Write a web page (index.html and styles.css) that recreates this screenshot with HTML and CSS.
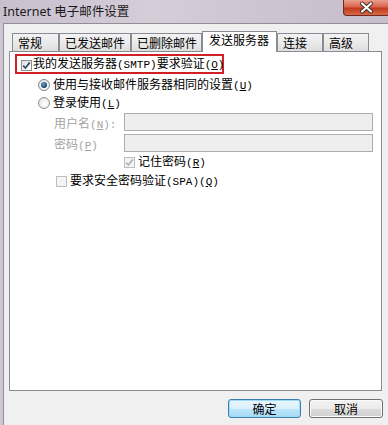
FILE: index.html
```html
<!DOCTYPE html>
<html lang="zh-CN">
<head>
<meta charset="utf-8">
<title>Internet 电子邮件设置</title>
<link rel="stylesheet" href="styles.css">
</head>
<body>
<div class="win">
  <div class="titlebar">
    <span class="title">Internet 电子邮件设置</span>
    <div class="close">
      <svg width="46" height="16" viewBox="0 0 46 16">
        <path d="M18 3.5 L27 11.5 M27 3.5 L18 11.5" stroke="#3b2a2a" stroke-width="4" stroke-linecap="round"/>
        <path d="M18 3.5 L27 11.5 M27 3.5 L18 11.5" stroke="#ffffff" stroke-width="2.2" stroke-linecap="round"/>
      </svg>
    </div>
  </div>
  <div class="frame">
    <div class="dialog">
      <div class="tabs">
        <div class="tab t1">常规</div>
        <div class="tab t2">已发送邮件</div>
        <div class="tab t3">已删除邮件</div>
        <div class="tab sel t4">发送服务器</div>
        <div class="tab t5">连接</div>
        <div class="tab t6">高级</div>
      </div>
      <div class="panel">
        <div class="redbox">
          <span class="cb">
            <svg width="9" height="9" viewBox="0 0 9 9"><path d="M1.2 4.6 L3.4 7 L7.8 1.4" fill="none" stroke="#2f4a6e" stroke-width="1.7"/></svg>
          </span>
          <span class="lbl">我的发送服务器<span class="en">(SMTP)</span>要求验证<span class="en">(<u>O</u>)</span></span>
        </div>
        <div class="rrow">
          <span class="radio on"><span class="dot"></span></span>
          <span class="lbl">使用与接收邮件服务器相同的设置<span class="en">(<u>U</u>)</span></span>
        </div>
        <div class="rrow">
          <span class="radio"></span>
          <span class="lbl">登录使用<span class="en">(<u>L</u>)</span></span>
        </div>
        <div class="frow first">
          <span class="flbl dis">用户名<span class="en">(<u>N</u>):</span></span>
          <span class="inp"></span>
        </div>
        <div class="frow">
          <span class="flbl dis">密码<span class="en">(<u>P</u>)</span></span>
          <span class="inp"></span>
        </div>
        <div class="crow remember">
          <span class="cb dcb">
            <svg width="9" height="9" viewBox="0 0 9 9"><path d="M1.2 4.6 L3.4 7 L7.8 1.4" fill="none" stroke="#b4b4b4" stroke-width="1.7"/></svg>
          </span>
          <span class="lbl">记住密码<span class="en">(<u>R</u>)</span></span>
        </div>
        <div class="crow spa">
          <span class="cb dcb"></span>
          <span class="lbl">要求安全密码验证<span class="en">(SPA)(<u>Q</u>)</span></span>
        </div>
      </div>
      <div class="buttons">
        <div class="btn ok">确定</div>
        <div class="btn cancel">取消</div>
      </div>
    </div>
  </div>
</div>
</body>
</html>
```

FILE: styles.css
```css
* { box-sizing: border-box; }
html, body { margin: 0; padding: 0; }
body {
  width: 388px;
  height: 425px;
  overflow: hidden;
  font-family: "Noto Sans CJK SC", sans-serif;
  font-size: 12px;
  color: #000;
  background: #d3cbd6;
}
.win { width: 388px; height: 425px; }
.titlebar {
  position: relative;
  height: 23px;
  background: linear-gradient(90deg, #c9bfcd 0%, #d6cdd9 40%, #cdc3d1 70%, #c7bdcb 100%);
  display: flex;
  align-items: center;
  padding-left: 3px;
}
.title {
  font-family: "Noto Sans", "Noto Sans CJK SC", sans-serif;
  font-size: 12.5px;
  color: #1a1a1a;
  line-height: 1;
  margin-top: 1px;
}
.close {
  position: absolute;
  top: 0;
  right: -2px;
  width: 47px;
  height: 16px;
  border: 1px solid #6b2a22;
  border-top: none;
  border-radius: 0 0 4px 4px;
  background: linear-gradient(180deg, #e9a08e 0%, #d9644c 45%, #c2391f 55%, #d86a44 100%);
}
.close svg { display: block; }
.frame {
  height: 402px;
  padding-left: 3px;
  background: #cfc7d2;
}
.dialog {
  height: 402px;
  border-left: 1px solid #8f8f95;
  border-top: 1px solid #8f8f95;
  background: #f0f0f0;
  padding: 7px 6px 0 5px;
}
.tabs {
  display: flex;
  align-items: flex-end;
  height: 20px;
  padding-left: 3px;
}
.tab {
  height: 18px;
  border: 1px solid #898c95;
  border-bottom: none;
  background: linear-gradient(180deg, #f3f3f3 0%, #ebebeb 50%, #dddddd 100%);
  padding-left: 5px;
  line-height: 17px;
  white-space: nowrap;
}
.t1 { width: 47px; }
.t2 { width: 72px; }
.t3 { width: 71px; }
.t4 { width: 75px; }
.t5 { width: 46px; }
.t6 { width: 46px; }
.tab.sel {
  height: 21px;
  margin-bottom: -1px;
  background: #fff;
  position: relative;
  z-index: 1;
  line-height: 16px;
  padding-left: 6px;
}
.panel {
  width: 373px;
  height: 340px;
  border: 1px solid #898c95;
  background: #fff;
}
.en {
  font-family: "Liberation Mono", monospace;
  font-size: 11px;
}
.lbl { white-space: nowrap; line-height: 1; }
.redbox {
  margin: 2px 0 0 5px;
  width: 209px;
  height: 20px;
  border: 2px solid #d11f26;
  display: flex;
  align-items: center;
  padding-left: 4px;
  gap: 1px;
}
.cb {
  width: 11px;
  height: 11px;
  border: 1px solid #8e8f8f;
  background: linear-gradient(135deg, #dcdcdc 0%, #f6f6f6 60%, #ffffff 100%);
  display: flex;
  align-items: center;
  justify-content: center;
  flex: none;
  margin-top: 2px;
}
.cb svg { display: block; }
.dcb {
  border-color: #bdbdbd;
  background: #f4f4f4;
}
.rrow {
  height: 18px;
  display: flex;
  align-items: center;
  padding-left: 28px;
  gap: 3px;
}
.redbox + .rrow { margin-top: 2px; }
.radio {
  width: 12px;
  height: 12px;
  border-radius: 50%;
  border: 1px solid #8e8f8f;
  background: radial-gradient(circle at 60% 60%, #ffffff 0%, #ececec 60%, #d4d4d4 100%);
  display: flex;
  align-items: center;
  justify-content: center;
  flex: none;
}
.radio.on { border-color: #7e8a94; }
.dot {
  width: 6px;
  height: 6px;
  border-radius: 50%;
  background: radial-gradient(circle at 40% 35%, #6fa4cc 0%, #1f4e78 60%, #13324f 100%);
}
.frow {
  display: flex;
  align-items: center;
  height: 18px;
  padding-left: 44px;
  margin-top: 3px;
}
.frow.first { margin-top: 1px; }
.flbl {
  width: 70px;
  white-space: nowrap;
}
.dis { color: #a3a3a3; }
.inp {
  width: 249px;
  height: 18px;
  border: 1px solid #adadad;
  background: #eeeeee;
}
.crow {
  display: flex;
  align-items: center;
  height: 18px;
  gap: 3px;
  margin-top: 1px;
}
.crow .cb { margin-top: 0; }
.remember { padding-left: 114px; }
.spa { padding-left: 46px; }
.buttons {
  display: flex;
  justify-content: flex-end;
  gap: 8px;
  margin-top: 8px;
  margin-right: -1px;
}
.btn {
  height: 19px;
  border-radius: 3px;
  display: flex;
  align-items: center;
  justify-content: center;
  line-height: 1;
}
.ok {
  width: 73px;
  border: 1px solid #3c7fb1;
  background: linear-gradient(180deg, #eaf6fd 0%, #d9f0fc 50%, #bee6fd 51%, #a7d9f5 100%);
  box-shadow: inset 0 0 0 1px #9fdcf7;
}
.cancel {
  width: 74px;
  border: 1px solid #707070;
  background: linear-gradient(180deg, #f2f2f2 0%, #ebebeb 50%, #dddddd 51%, #cfcfcf 100%);
  box-shadow: inset 0 0 0 1px #fbfbfb;
}
```
